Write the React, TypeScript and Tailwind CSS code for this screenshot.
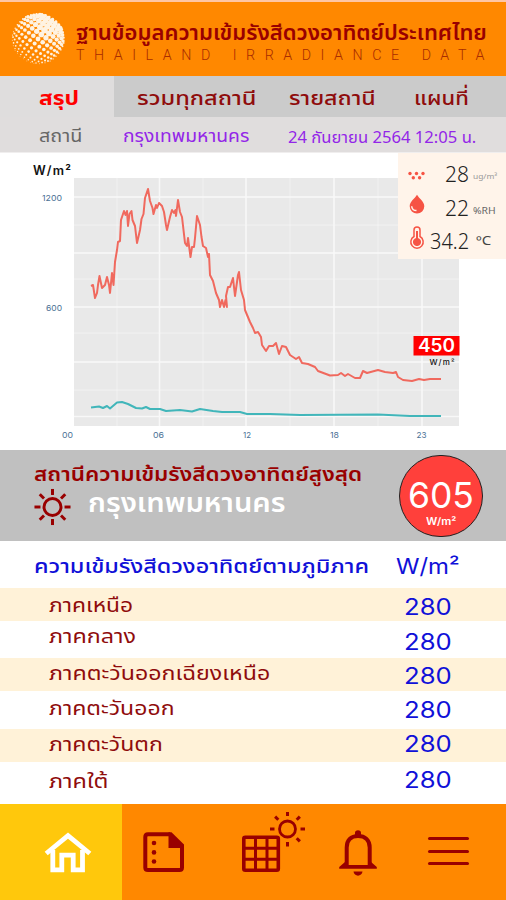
import { useLayoutEffect, useRef, useState } from "react";

const THAI = "font-['Noto_Sans_Thai','Noto_Sans','Open_Sans',sans-serif]";
const LATIN = "font-['Inter','Noto_Sans',sans-serif]";

/** One line of text, condensed or widened to occupy exactly `w` pixels. */
function Fit({ w, className = "", children }: { w: number; className?: string; children: string }) {
  const ref = useRef<HTMLSpanElement>(null);
  const [scale, setScale] = useState(1);
  useLayoutEffect(() => {
    const measure = () => {
      if (ref.current) setScale(w / ref.current.offsetWidth);
    };
    measure();
    document.fonts?.ready.then(measure);
  }, [w, children]);
  return (
    <div className={`shrink-0 whitespace-nowrap leading-none ${className}`} style={{ width: w }}>
      <span ref={ref} className="inline-block origin-left" style={{ transform: `scaleX(${scale})` }}>
        {children}
      </span>
    </div>
  );
}

/** Halftone sphere: large dots near the lit upper right, fading to the lower left. */
function Globe() {
  const dots = [];
  const a = 0.62;
  for (let i = -7; i <= 7; i++) {
    for (let j = -7; j <= 7; j++) {
      const u = i * 0.165;
      const v = j * 0.165;
      const d = Math.hypot(u, v);
      if (d > 1.12) continue;
      const k = d > 0 ? Math.sin(Math.min(d * 1.35, 1.5)) / d : 1.35;
      const x = (u * Math.cos(a) - v * Math.sin(a)) * k * 26;
      const y = (u * Math.sin(a) + v * Math.cos(a)) * k * 25;
      const light = Math.hypot(x - 7, y + 10) / 36;
      const size = Math.max(0.6, 3.3 - light * 2.6);
      dots.push(
        <circle key={`${i}_${j}`} cx={x + 27} cy={y + 27} r={d > 0.98 ? size * 0.6 : size} fill="#fff3e2" />,
      );
    }
  }
  return <svg className="h-[54px] w-[54px] shrink-0" viewBox="0 0 54 54">{dots}</svg>;
}

function Sun({ className, r, inner, outer, sw }: { className: string; r: number; inner: number; outer: number; sw: number }) {
  return (
    <svg className={className} viewBox="-20 -20 40 40" fill="none" stroke="#990000" strokeWidth={sw}>
      <circle r={r} />
      {[0, 45, 90, 135, 180, 225, 270, 315].map((d) => (
        <path key={d} d={`M${inner} 0H${outer}`} transform={`rotate(${d})`} />
      ))}
    </svg>
  );
}

const IRRADIANCE =
  "91,286 93,285 95,298 97,293 98,285 99.5,276 102,288 105,285 107,277 109,285 110,293 112,273 113.5,285 115,262 117,250 118,242 120,241 121,220 124,211 125.5,215 127,211 128,226 129.5,214 131.5,211 132.5,220 135,226 137,243 140,230 141.5,219 143.5,214 145,198 148,189 150,201 152.5,208 153.5,214 156,205 157,208 159,203 162,206 164,212 166,225 167,230 170,217 172,210 174,213 175.5,210 176,216 178,200 180,212 182,217 183.5,230 185,243 187,246 188,238 190.5,257 192,247 194,247 195,238 197,216 200,225 201.5,237 203,246 206,248 208,257 209,254 210,275 213,281 216,293 219,300 220,307 222,300 224,307 225.5,300 227,307 226,296 228,287 230,287 233,278 235,296 238,275 239,272 241,290 244,300 245,310 250,322 253,328 255,333 258,332 261,337 262,345 266,351 269,346 273,346 276,343 279,354 282,346 286,347 290,355 296,359 299,357 302,363 308,364 315,367 318,371 330,375.5 338,375 341,373 345,376 348,374 355,378 360,378 363,371 367,373 378,370 385,372 393,373 396,372 398,377 403,380 412,381 419,379 424,380 430,379 441,379";
const BASELINE =
  "91,407.5 99,406.5 103,408 107,406 110,408.5 117,402.5 122,402 128,404 136,408 142,408.5 146,407 150,409 160,409 166,411 180,410 192,411.5 200,409 213,411 222,412 240,412 247,414 270,414 300,415 378,414.5 410,416 441,416";

function Chart() {
  return (
    <svg className="block h-[297px] w-full" viewBox="0 153 506 297">
      <rect x="74" y="178" width="385" height="248" fill="#e9e9e9" />
      <g stroke="#f8f8f8">
        {[159.5, 246, 334, 422].map((x) => <path key={x} d={`M${x} 178V426`} strokeWidth="1.6" />)}
        {[117, 203, 290, 378].map((x) => <path key={x} d={`M${x} 178V426`} strokeWidth="0.6" />)}
        {[197, 253, 307, 362, 416.5].map((y) => <path key={y} d={`M74 ${y}H459`} strokeWidth="1.6" />)}
        {[225, 279, 333, 390].map((y) => <path key={y} d={`M74 ${y}H459`} strokeWidth="0.7" />)}
      </g>
      <polyline points={IRRADIANCE} fill="none" stroke="#f0695e" strokeWidth="2" strokeLinejoin="round" />
      <polyline points={BASELINE} fill="none" stroke="#41b6ba" strokeWidth="2" strokeLinejoin="round" />
      <g className={LATIN} fill="#4a7195" fontSize="8">
        <text x="42" y="200.5" textLength="20" lengthAdjust="spacingAndGlyphs">1200</text>
        <text x="46" y="311" textLength="16" lengthAdjust="spacingAndGlyphs">600</text>
        <text x="62" y="438" textLength="11" lengthAdjust="spacingAndGlyphs">00</text>
        <text x="153" y="438" textLength="11" lengthAdjust="spacingAndGlyphs">06</text>
        <text x="243" y="438" textLength="8" lengthAdjust="spacingAndGlyphs">12</text>
        <text x="330" y="438" textLength="9" lengthAdjust="spacingAndGlyphs">18</text>
        <text x="416.5" y="438" textLength="10" lengthAdjust="spacingAndGlyphs">23</text>
      </g>
      <text className={LATIN} x="33" y="174.5" textLength="38" fontSize="12.5" fontWeight="600" fill="#111">W/m²</text>
      <rect x="413.5" y="336" width="46" height="19.5" fill="#ff0000" />
      <text className={LATIN} x="418" y="352" textLength="37" lengthAdjust="spacingAndGlyphs" fontSize="18" fontWeight="600" fill="#fff">450</text>
      <text className={LATIN} x="429.5" y="365" textLength="25" fontSize="8" fontWeight="500" fill="#111">W/m²</text>
    </svg>
  );
}

const REGIONS = [
  { name: "ภาคเหนือ", w: 84, h: "h-[33px]", bg: "bg-[#fff2d8]", pt: "pt-[9px]", vt: "pt-[8px]" },
  { name: "ภาคกลาง", w: 87, h: "h-[37px]", bg: "bg-white", pt: "pt-[7px]", vt: "pt-[10px]" },
  { name: "ภาคตะวันออกเฉียงเหนือ", w: 221, h: "h-[33px]", bg: "bg-[#fff2d8]", pt: "pt-[7px]", vt: "pt-[7px]" },
  { name: "ภาคตะวันออก", w: 126, h: "h-[38px]", bg: "bg-white", pt: "pt-[9px]", vt: "pt-[8px]" },
  { name: "ภาคตะวันตก", w: 114, h: "h-[33px]", bg: "bg-[#fff2d8]", pt: "pt-[7px]", vt: "pt-[4px]" },
  { name: "ภาคใต้", w: 59, h: "h-[42px]", bg: "bg-white", pt: "pt-[11px]", vt: "pt-[7px]" },
];

export default function App() {
  return (
    <div className={`flex h-[900px] w-[506px] flex-col overflow-hidden bg-white ${THAI}`}>
      <header className="flex h-[76px] shrink-0 border-t-2 border-[#ffc6a4] bg-[#ff8800] pl-[11px] pt-[10px] text-[#990000]">
        <Globe />
        <div className="ml-[11px] flex flex-col pt-[11px]">
          <Fit w={411} className="text-[21px] font-semibold">ฐานข้อมูลความเข้มรังสีดวงอาทิตย์ประเทศไทย</Fit>
          <Fit w={418} className="mt-[4px] font-['Roboto',sans-serif] text-[15px] font-light tracking-[10px] text-[#a82c00]">THAILAND IRRADIANCE DATA</Fit>
        </div>
      </header>

      <nav className="flex h-[41px] shrink-0 bg-[#cbcbcb] text-[20px] font-medium text-[#8f0c0c]">
        <div className="w-[114px] bg-[#dfdddd] pl-[39px] pt-[13px]">
          <Fit w={40} className="font-bold text-[#ff0000]">สรุป</Fit>
        </div>
        <div className="flex pl-[23px] pt-[13px]">
          <Fit w={119}>รวมทุกสถานี</Fit>
          <Fit w={87} className="ml-[33px]">รายสถานี</Fit>
          <Fit w={55} className="ml-[38px]">แผนที่</Fit>
        </div>
      </nav>

      <section className="flex h-[36px] shrink-0 border-b border-[#f0eeee] bg-[#e0dddd] pl-[39px] pt-[12px] text-[17px]">
        <Fit w={43} className="text-[#666666]">สถานี</Fit>
        <Fit w={126} className="ml-[41px] text-[#9326e8]">กรุงเทพมหานคร</Fit>
        <Fit w={188} className="ml-[39px] mt-[1px] text-[16px] text-[#9326e8]">24 กันยายน 2564 12:05 น.</Fit>
      </section>

      <section className="relative h-[297px] shrink-0">
        <Chart />
        <aside className="absolute right-0 top-0 flex h-[106px] w-[108px] flex-col bg-[#fff4ea] pt-[6px] text-[#222]">
          <div className="flex h-[33px] items-center">
            <svg className="ml-[10px] h-[10px] w-[17px]" viewBox="0 0 17 10" fill="#f65344">
              <circle cx="2" cy="2.5" r="1.7" /><circle cx="8.5" cy="2.5" r="1.7" /><circle cx="15" cy="2.5" r="1.7" />
              <circle cx="5.3" cy="6.7" r="1.7" /><circle cx="11.6" cy="6.7" r="1.7" />
            </svg>
            <Fit w={24} className="-mt-[2px] ml-[20px] font-['Noto_Sans',sans-serif] text-[21px] font-light">28</Fit>
            <Fit w={24} className="ml-[4px] mt-[4px] text-[7px] text-[#999]">ug/m³</Fit>
          </div>
          <div className="flex h-[33px] items-center">
            <svg className="-mt-[10px] ml-[11px] h-[20px] w-[16px]" viewBox="0 0 16 20">
              <path d="M8 .8C6 4.5.7 7.4.7 12.3a7.3 7.3 0 0 0 14.6 0C15.3 7.4 10 4.5 8 .8Z" fill="#f65344" />
              <path d="M2.7 12.2c.2 2.7 2 4.3 4.8 4.4" stroke="#fff4ea" strokeWidth="1.5" fill="none" />
            </svg>
            <Fit w={24} className="ml-[20px] font-['Noto_Sans',sans-serif] text-[21px] font-light">22</Fit>
            <Fit w={23} className="ml-[4px] mt-[6px] text-[9px] text-[#666]">%RH</Fit>
          </div>
          <div className="flex h-[33px] items-center">
            <svg className="-mt-[8px] ml-[11px] h-[24px] w-[16px]" viewBox="0 0 16 24" fill="none" stroke="#f65344">
              <path d="M5 10.5V4a3 3 0 0 1 6 0v6.5a6.2 6.2 0 1 1-6 0Z" strokeWidth="1.5" />
              <circle cx="8" cy="16" r="3.6" fill="#f65344" /><path d="M8 5v9" strokeWidth="2" />
            </svg>
            <Fit w={39} className="ml-[5px] font-['Noto_Sans',sans-serif] text-[21px] font-light">34.2</Fit>
            <Fit w={15} className="ml-[7px] -mt-[2px] text-[12px] text-[#444]">ºC</Fit>
          </div>
        </aside>
      </section>

      <section className="flex h-[91px] shrink-0 bg-[#c0c0c0] pl-[34px]">
        <div className="flex w-[365px] flex-col pt-[16px]">
          <Fit w={328} className="text-[19px] font-semibold text-[#990000]">สถานีความเข้มรังสีดวงอาทิตย์สูงสุด</Fit>
          <div className="flex">
            <Sun className="mt-[2px] h-[40px] w-[37px]" r={9.2} inner={13} outer={19.5} sw={3.2} />
            <Fit w={198} className="ml-[17px] mt-[6px] text-[26px] font-semibold text-white">กรุงเทพมหานคร</Fit>
          </div>
        </div>
        <div className={`mt-[5px] flex h-[82px] w-[84px] flex-col items-center rounded-full border border-[#222] bg-[#ff403b] pt-[21px] text-white ${LATIN}`}>
          <Fit w={66} className="text-[36px]">605</Fit>
          <Fit w={30} className="mt-[3px] text-[10px] font-semibold">W/m²</Fit>
        </div>
      </section>

      <section className="flex h-[47px] shrink-0 pl-[34px] pt-[14px] text-[#1010d8]">
        <Fit w={335} className="mt-[2px] text-[20px] font-medium">ความเข้มรังสีดวงอาทิตย์ตามภูมิภาค</Fit>
        <Fit w={64} className={`ml-[27px] text-[22px] ${LATIN}`}>W/m²</Fit>
      </section>

      {REGIONS.map((r) => (
        <div key={r.name} className={`flex shrink-0 pl-[49px] ${r.h} ${r.bg}`}>
          <div className={`w-[355px] ${r.pt}`}>
            <Fit w={r.w} className="text-[19px] text-[#8f0c0c]">{r.name}</Fit>
          </div>
          <div className={r.vt}>
            <Fit w={48} className={`text-[23px] text-[#1010d8] ${LATIN}`}>280</Fit>
          </div>
        </div>
      ))}

      <footer className="flex h-[96px] shrink-0 bg-[#ff8800]">
        <div className="w-[122px] bg-[#ffc80c] pl-[44px] pt-[28px]">
          <svg className="h-[42px] w-[48px]" viewBox="44 832 48 42" fill="none" stroke="#fff" strokeWidth="4.8">
            <path d="M46.2 853.5L68 835.7L89.8 853.5" />
            <path d="M52.8 850V869.8H61.8V855.2H73.2V869.8H82.5V850" />
          </svg>
        </div>
        <div className="pl-[21px] pt-[28px]">
          <svg className="h-[41px] w-[42px]" viewBox="143 832 42 41" fill="#990000">
            <path d="M170 834.3H148Q145.3 834.3 145.3 837V867.5Q145.3 870 148 870H179.5Q182 870 182 867.5V846" fill="none" stroke="#990000" strokeWidth="4" />
            <path d="M168.5 832.3H171.5L184 844.5V848H168.5Z" />
            <circle cx="154" cy="843" r="2.3" /><circle cx="154" cy="852.4" r="2.3" /><circle cx="154" cy="861.5" r="2.3" />
          </svg>
        </div>
        <div className="pl-[57px] pt-[8px]">
          <svg className="h-[62px] w-[64px]" viewBox="242 812 64 62" fill="none" stroke="#990000">
            <rect x="243.8" y="837.3" width="34.5" height="33" rx="1.5" strokeWidth="3.6" />
            <path d="M255.5 837V870M267 837V870M244 848.3H278M244 859.3H278" strokeWidth="3" />
            <circle cx="287.5" cy="829" r="8" strokeWidth="2.8" />
            {[0, 45, 90, 180, 225, 270, 315].map((d) => (
              <path key={d} d="M300.5 829H305" strokeWidth="3" transform={`rotate(${d} 287.5 829)`} />
            ))}
          </svg>
        </div>
        <div className="pl-[33px] pt-[25px]">
          <svg className="h-[48px] w-[38px]" viewBox="339 829 38 48" fill="none" stroke="#990000">
            <path d="M346.7 866V847.5C346.7 840 351 836 358 836S369.7 840 369.7 847.5V866" strokeWidth="4" />
            <path d="M355 836V833Q355 830.3 358 830.3T361 833V836L364 838H352ZM345 862L339.2 867V868.8H376.8V867L371 862V865H345Z" fill="#990000" stroke="none" />
            <path d="M353.5 871.5H362.5C362 877 354 877 353.5 871.5Z" fill="#990000" stroke="none" />
          </svg>
        </div>
        <div className="flex flex-col gap-[9.5px] pl-[51px] pt-[33px]">
          <div className="h-[3px] w-[41px] rounded-full bg-[#990000]" />
          <div className="h-[3px] w-[41px] rounded-full bg-[#990000]" />
          <div className="h-[3px] w-[41px] rounded-full bg-[#990000]" />
        </div>
      </footer>
    </div>
  );
}
